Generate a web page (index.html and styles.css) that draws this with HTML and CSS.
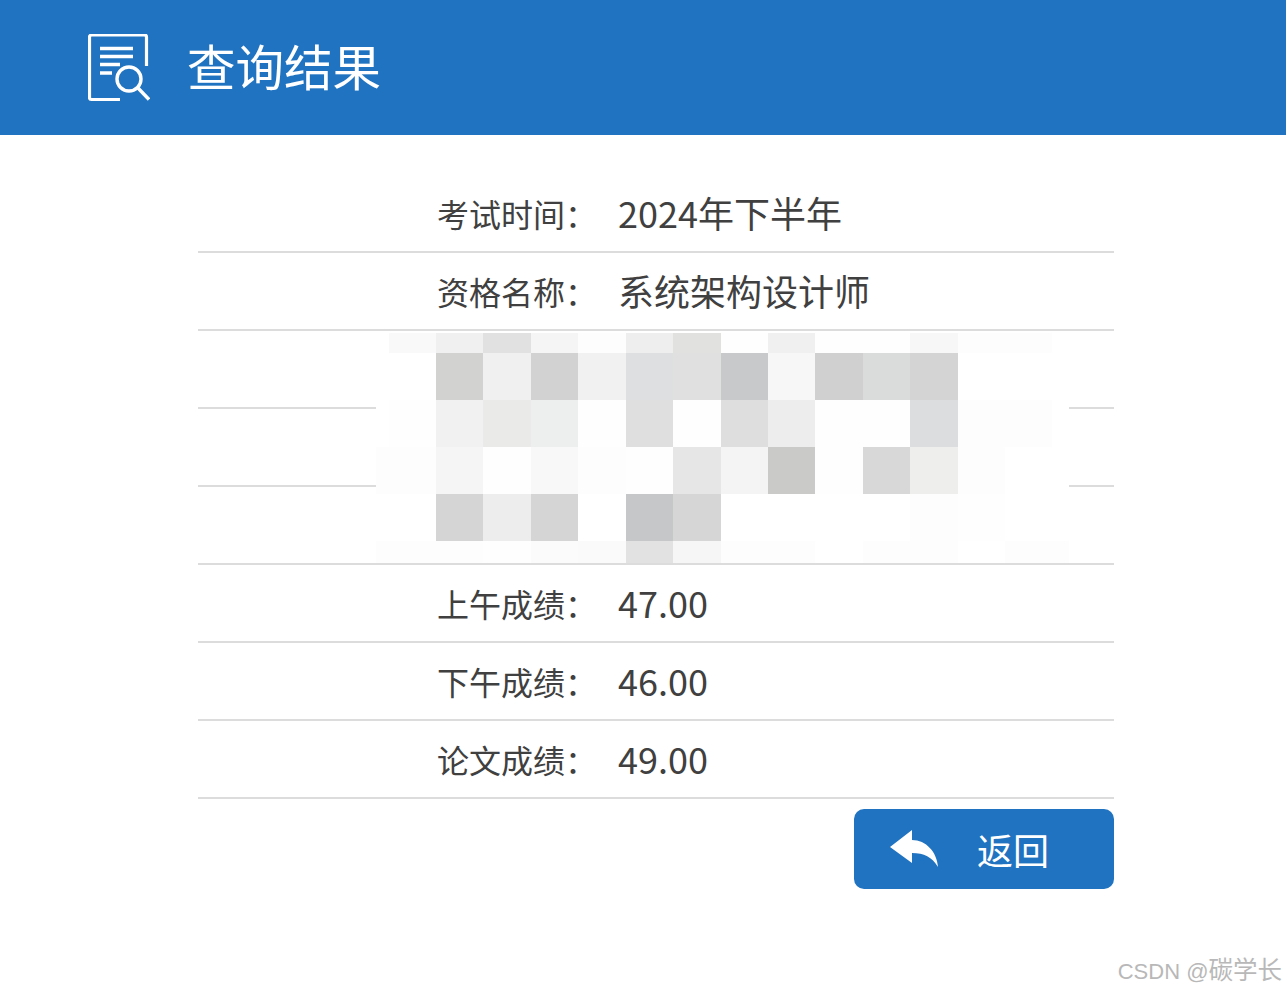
FILE: index.html
```html
<!DOCTYPE html>
<html lang="zh-CN">
<head>
<meta charset="utf-8">
<title>查询结果</title>
<link rel="stylesheet" href="styles.css">
</head>
<body>
<header class="top">
  <svg class="top-icon" width="62" height="68" viewBox="0 0 62 68" fill="none" stroke="#fff" aria-hidden="true">
    <path d="M32 65.500H3.500a2 2 0 0 1-2-2V3a2 2 0 0 1 2-2H56.500a2 2 0 0 1 2 2V32" stroke-width="3.200"/>
    <path d="M12 14.500H45M12 22.500H45M12 30.500H32M12 39H24" stroke-width="3.400"/>
    <circle cx="41" cy="45" r="12" stroke-width="3.400"/>
    <path d="M50 54L61 65.500" stroke-width="3.400"/>
  </svg>
  <h1 class="top-title">查询结果</h1>
</header>
<main class="result">
  <div class="rows">
    <div class="row"><span class="label">考试时间：</span><span class="value">2024年下半年</span></div>
    <div class="row"><span class="label">资格名称：</span><span class="value">系统架构设计师</span></div>
    <div class="row"></div>
    <div class="row"></div>
    <div class="row"></div>
    <div class="row"><span class="label">上午成绩：</span><span class="value">47.00</span></div>
    <div class="row"><span class="label">下午成绩：</span><span class="value">46.00</span></div>
    <div class="row"><span class="label">论文成绩：</span><span class="value">49.00</span></div>
    <div class="mosaic" aria-hidden="true">
      <i></i><i class="g-f9"></i><i class="g-f0"></i><i class="g-e1"></i><i class="g-f5"></i><i class="g-fd"></i><i class="g-ee"></i><i class="g-df"></i><i class="g-fe"></i><i class="g-f0"></i><i class="g-fe"></i><i class="g-fe"></i><i class="g-f7"></i><i class="g-fd"></i><i class="g-fd"></i><i></i>
      <i></i><i></i><i class="g-d2w"></i><i class="g-f0"></i><i class="g-d2"></i><i class="g-f1"></i><i class="g-de"></i><i class="g-e0"></i><i class="g-c8"></i><i class="g-f7"></i><i class="g-d0"></i><i class="g-da"></i><i class="g-d4"></i><i></i><i></i><i></i>
      <i></i><i class="g-fe"></i><i class="g-f1"></i><i class="g-ea"></i><i class="g-ec"></i><i class="g-fe"></i><i class="g-dd"></i><i class="g-fe"></i><i class="g-dc2"></i><i class="g-ed"></i><i class="g-fe"></i><i class="g-fe"></i><i class="g-dc"></i><i class="g-fd"></i><i class="g-fd"></i><i></i>
      <i class="g-fd"></i><i class="g-fd"></i><i class="g-f5"></i><i class="g-fe"></i><i class="g-f8"></i><i class="g-fd"></i><i class="g-fe"></i><i class="g-e6"></i><i class="g-f4"></i><i class="g-ca"></i><i class="g-fe"></i><i class="g-d8"></i><i class="g-eb"></i><i class="g-fd"></i><i></i><i></i>
      <i></i><i></i><i class="g-d5"></i><i class="g-ed"></i><i class="g-d5"></i><i></i><i class="g-c6"></i><i class="g-d6"></i><i></i><i></i><i></i><i></i><i class="g-fd"></i><i class="g-fe"></i><i></i><i></i>
      <i class="g-fd"></i><i class="g-fd"></i><i class="g-fd"></i><i class="g-fe"></i><i class="g-fb"></i><i class="g-fa"></i><i class="g-e2"></i><i class="g-f6"></i><i class="g-fd"></i><i class="g-fd"></i><i></i><i class="g-fd"></i><i class="g-fd"></i><i></i><i class="g-fd"></i><i class="g-fd"></i>
    </div>
  </div>
  <div class="actions">
    <button class="back" type="button">
      <svg class="back-icon" width="48" height="38" viewBox="0 0 48 38" fill="#fff" aria-hidden="true">
        <path d="M0 17L22 0V10C36 10 47 22 48 37C42 27 34 23 22 23V33Z"/>
      </svg>
      <span>返回</span>
    </button>
  </div>
</main>
<div class="watermark"><span class="wm-latin">CSDN @</span>碳学长</div>
</body>
</html>
```

FILE: styles.css
```css
* { box-sizing: border-box; }
html, body { margin: 0; padding: 0; }
body {
  position: relative;
  height: 992px;
  overflow: hidden;
  background: #fff;
  color: #404040;
  font-family: "Noto Sans CJK SC", "Noto Sans", sans-serif;
}
.top {
  display: flex;
  align-items: center;
  height: 135px;
  padding-left: 88px;
  background: #2073c0;
  color: #fff;
}
.top-icon { flex: none; }
.top-title {
  margin: 0 0 4px 37px;
  font-size: 48.500px;
  font-weight: 400;
  line-height: 1;
}
.result {
  width: 916px;
  margin-left: 198px;
  padding-top: 40px;
}
.rows { position: relative; }
.row {
  display: flex;
  align-items: center;
  height: 78px;
  padding-left: 239px;
  border-bottom: 2px solid #dcdcdc;
}
.label { width: 181px; font-size: 32px; line-height: 1; }
.value { margin-bottom: 3px; font-size: 36px; line-height: 1; }
.mosaic {
  position: absolute;
  left: 178px;
  top: 158px;
  width: 693px;
  height: 230px;
  display: grid;
  grid-template-columns: 13px 47px 47px 48px 47px 48px 47px 48px 47px 47px 48px 47px 48px 47px 47px 17px;
  grid-template-rows: 20px 47px 47px 47px 47px 22px;
  background: #fff;
}
.mosaic i { display: block; }
.g-c6 { background: #c6c7c9; }
.g-c8 { background: #c8c9cb; }
.g-ca { background: #cacac8; }
.g-d0 { background: #d0d0d0; }
.g-d2 { background: #d2d2d2; }
.g-d2w { background: #d2d2d0; }
.g-d4 { background: #d4d4d4; }
.g-d5 { background: #d5d5d5; }
.g-d6 { background: #d6d6d6; }
.g-d8 { background: #d8d8d8; }
.g-da { background: #dadcdb; }
.g-dc { background: #dcdddf; }
.g-dc2 { background: #dedede; }
.g-dd { background: #dfdfdf; }
.g-de { background: #dedfe1; }
.g-df { background: #e1e1df; }
.g-e0 { background: #e0e0e0; }
.g-e1 { background: #e1e1e1; }
.g-e2 { background: #e2e2e2; }
.g-e6 { background: #e6e6e6; }
.g-ea { background: #eaeae8; }
.g-eb { background: #eeeeec; }
.g-ec { background: #edefee; }
.g-ed { background: #ededed; }
.g-ee { background: #eeeeee; }
.g-f0 { background: #f0f0f0; }
.g-f1 { background: #f1f1f1; }
.g-f4 { background: #f4f4f4; }
.g-f5 { background: #f5f5f5; }
.g-f6 { background: #f6f6f6; }
.g-f7 { background: #f7f7f7; }
.g-f8 { background: #f8f8f8; }
.g-f9 { background: #f9f9f9; }
.g-fa { background: #fafafa; }
.g-fb { background: #fbfbfb; }
.g-fd { background: #fdfdfd; }
.g-fe { background: #fefefe; }
.actions {
  display: flex;
  justify-content: flex-end;
  margin-top: 10px;
}
.back {
  display: flex;
  align-items: center;
  width: 260px;
  height: 80px;
  padding: 0 0 0 36px;
  border: 0;
  border-radius: 10px;
  background: #2073c0;
  color: #fff;
  font-family: inherit;
  font-size: 36px;
  line-height: 1;
}
.back-icon { flex: none; margin-right: 39px; }
.watermark {
  position: absolute;
  right: 4px;
  bottom: 6px;
  color: #b8b8b8;
  font-size: 24.500px;
  line-height: 28px;
  white-space: nowrap;
}
.wm-latin { font-family: "Liberation Sans", sans-serif; font-size: 22px; }
```
